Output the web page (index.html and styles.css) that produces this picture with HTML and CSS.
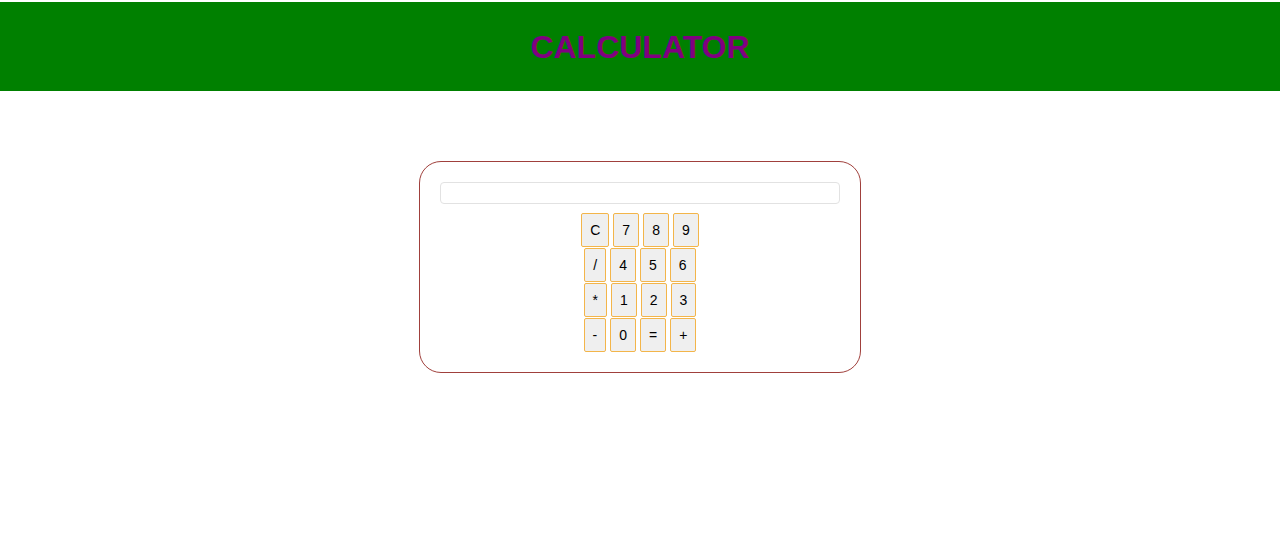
FILE: index.html
```html
<!DOCTYPE html>
<html lang="en">
<head>
<meta charset="utf-8">
<title>Calculator</title>
<link rel="stylesheet" href="styles.css">
</head>
<body>
<header class="header">
  <h1 class="title">CALCULATOR</h1>
</header>
<main class="main">
  <div class="calc">
    <input class="display" type="text">
    <div class="keys">
      <div class="row">
        <button class="key">C</button>
        <button class="key">7</button>
        <button class="key">8</button>
        <button class="key">9</button>
      </div>
      <div class="row">
        <button class="key">/</button>
        <button class="key">4</button>
        <button class="key">5</button>
        <button class="key">6</button>
      </div>
      <div class="row">
        <button class="key">*</button>
        <button class="key">1</button>
        <button class="key">2</button>
        <button class="key">3</button>
      </div>
      <div class="row">
        <button class="key">-</button>
        <button class="key">0</button>
        <button class="key">=</button>
        <button class="key">+</button>
      </div>
    </div>
  </div>
</main>
</body>
</html>
```
FILE: styles.css
```css
html, body {
  margin: 0;
  padding: 0;
  background: #ffffff;
  font-family: "Liberation Sans", Arial, sans-serif;
}

.header {
  margin-top: 2px;
  height: 89px;
  background: #008000;
  display: flex;
  align-items: center;
  justify-content: center;
}

.title {
  margin: 0;
  font-size: 32px;
  font-weight: bold;
  color: #800080;
  line-height: 1;
}

.main {
  display: flex;
  justify-content: center;
  padding-top: 70px;
}

.calc {
  width: 400px;
  padding: 20px;
  border: 1px solid #a0403c;
  border-radius: 22px;
  display: flex;
  flex-direction: column;
  align-items: center;
}

.display {
  box-sizing: border-box;
  width: 400px;
  height: 22px;
  margin: 0;
  border: 1px solid #e2e2e2;
  border-radius: 4px;
  background: #ffffff;
  outline: none;
}

.keys {
  margin-top: 9px;
  display: flex;
  flex-direction: column;
  gap: 1px;
}

.row {
  display: flex;
  justify-content: center;
  gap: 4px;
}

.key {
  box-sizing: border-box;
  height: 34px;
  margin: 0;
  padding: 0 8px;
  font-family: "Liberation Sans", Arial, sans-serif;
  font-size: 14px;
  color: #000000;
  background: #efefef;
  border: 1px solid #f3b54a;
  border-radius: 2px;
}
```
